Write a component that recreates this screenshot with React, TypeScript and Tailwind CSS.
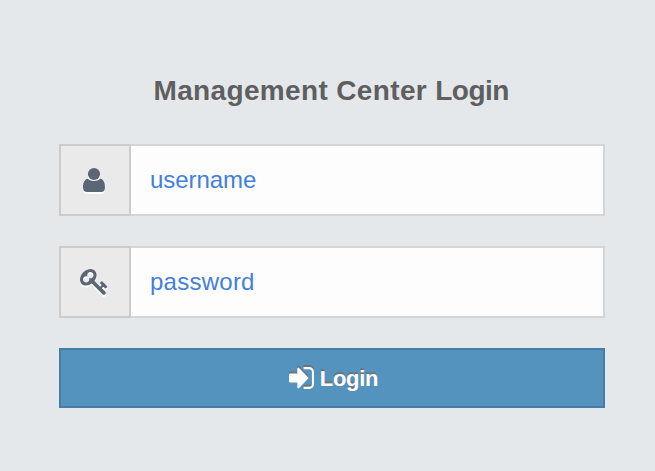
import type { ReactNode } from "react";

function UserIcon() {
  return (
    <svg viewBox="0 0 22 24" className="mr-0.5 h-6 w-[22px] overflow-visible drop-shadow-[0_2px_0_#fff]" fill="currentColor">
      <circle cx="11" cy="6" r="6.1" />
      <path d="M4.7 10.8C1.2 11.3 0 15.5 0 19.5C0 22.5 1.5 24 4 24H18C20.5 24 22 22.5 22 19.5C22 15.5 20.8 11.3 17.3 10.8C13.6 13.8 8.4 13.8 4.7 10.8Z" />
    </svg>
  );
}

function KeyIcon() {
  return (
    <svg viewBox="64 128 1664 1664" className="mt-px mr-0.5 h-[27px] w-[27px] overflow-visible drop-shadow-[0_2px_0_#fff]" fill="currentColor">
      <path d="M832 512q0-80-56-136t-136-56-136 56-56 136q0 42 19 83-41-19-83-19-80 0-136 56t-56 136 56 136 136 56 136-56 56-136q0-42-19-83 41 19 83 19 80 0 136-56t56-136zm851 704q0 17-49 66t-66 49q-9 0-28.5-16t-36.5-33-38.5-40-24.5-26l-96 96 220 220q28 28 28 68 0 42-39 81t-81 39q-40 0-68-28l-671-671q-176 131-365 131-163 0-265.5-102.5t-102.5-265.5q0-160 95-313t248-248 313-95q163 0 265.5 102.5t102.5 265.5q0 189-131 365l355 355 96-96q-3-3-26-24.5t-40-38.5-33-36.5-16-28.5q0-17 49-66t66-49q13 0 23 10 6 6 46 44.5t82 79.5 86.5 86 73 78 28.5 41z" />
    </svg>
  );
}

function SignInIcon() {
  return (
    <svg viewBox="128 256 1536 1280" preserveAspectRatio="none" className="h-[22px] w-[25px] overflow-visible drop-shadow-[0_-2px_0_#6c7479]" fill="currentColor">
      <path d="M1312 896q0 26-19 45l-544 544q-19 19-45 19t-45-19-19-45v-288h-448q-26 0-45-19t-19-45v-384q0-26 19-45t45-19h448v-288q0-26 19-45t45-19 45 19l544 544q19 19 19 45zm352-352v704q0 119-84.5 203.5t-203.5 84.5h-320q-13 0-22.5-9.5t-9.5-22.5q0-4-1-20t-.5-26.5 3-23.5 10-19.5 20.5-6.5h320q66 0 113-47t47-113v-704q0-66-47-113t-113-47h-312l-11.5-1-11.5-3-8-5.5-7-9-2-13.5q0-4-1-20t-.5-26.5 3-23.5 10-19.5 20.5-6.5h320q119 0 203.5 84.5t84.5 203.5z" />
    </svg>
  );
}

function Field({ icon, children }: { icon: ReactNode; children: ReactNode }) {
  return (
    <div className="flex h-[72px] w-full">
      <div className="z-10 flex w-[72px] shrink-0 items-center justify-center border-2 border-[#cccccc] bg-[#eaeaea] text-[#5b6775]">{icon}</div>
      {children}
    </div>
  );
}

export default function App() {
  return (
    <main className="flex h-[471px] w-full flex-col bg-[#e4e8eb] pl-[59px] pr-[50px] pt-[71px] font-['Liberation_Sans',Arial,sans-serif]">
      <h1 className="h-[73px] pl-[94.5px] text-[28px] leading-10 font-bold whitespace-nowrap text-[#5f5f5f]"><span className="tracking-[0.35px]">Management </span><span className="tracking-[0.35px]">Center </span><span className="tracking-[-0.5px]">Login</span></h1>
      <form className="flex flex-col gap-[30px]">
        <Field icon={<UserIcon />}>
          <input type="text" placeholder="username" className="-ml-0.5 min-w-0 flex-1 border-2 border-[#d5d5d5] bg-[#fdfdfd] pl-[19px] text-[24px] tracking-[-0.05px] text-[#3f79d8] outline-none placeholder:text-[#437fdb]" />
        </Field>
        <Field icon={<KeyIcon />}>
          <input type="password" placeholder="password" className="-ml-0.5 min-w-0 flex-1 border-2 border-[#d5d5d5] bg-[#fdfdfd] pl-[19px] text-[24px] tracking-[0.25px] text-[#3f79d8] outline-none placeholder:text-[#437fdb]" />
        </Field>
        <button type="button" className="flex h-[60px] items-center justify-center gap-1.5 border-2 border-[#457da4] bg-[#5593bf] pl-[3px] text-[22px] font-bold tracking-[-0.3px] text-white [text-shadow:0_-2px_0_#6c7479]"><SignInIcon />Login</button>
      </form>
    </main>
  );
}
